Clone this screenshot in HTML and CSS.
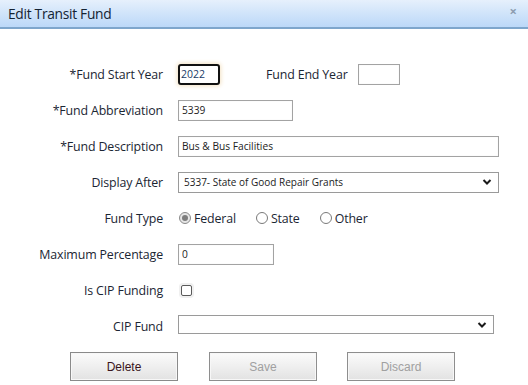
FILE: index.html
```html
<!DOCTYPE html>
<html>
<head>
<meta charset="utf-8">
<link rel="stylesheet" href="styles.css">
</head>
<body>
<div class="dialog">
  <div class="titlebar">
    <span class="title">Edit Transit Fund</span>
    <span class="close">&#215;</span>
  </div>
  <div class="form">
    <div class="label">*Fund Start Year</div>
    <div class="field row-flex">
      <input class="inp year focused" type="text" value="2022">
      <span class="label end-label">Fund End Year</span>
      <input class="inp year" type="text" value="">
    </div>

    <div class="label">*Fund Abbreviation</div>
    <div class="field"><input class="inp abbr" type="text" value="5339"></div>

    <div class="label">*Fund Description</div>
    <div class="field"><input class="inp wide" type="text" value="Bus &amp; Bus Facilities"></div>

    <div class="label">Display After</div>
    <div class="field">
      <div class="sel wide">
        <span class="sel-text">5337- State of Good Repair Grants</span>
        <svg class="chev" width="10" height="8" viewBox="0 0 10 8"><path d="M1.5 2 L5 5.5 L8.5 2" fill="none" stroke="#1a1a1a" stroke-width="2"/></svg>
      </div>
    </div>

    <div class="label">Fund Type</div>
    <div class="field radios">
      <span class="radio-item"><span class="radio checked"></span>Federal</span>
      <span class="radio-item"><span class="radio"></span>State</span>
      <span class="radio-item"><span class="radio"></span>Other</span>
    </div>

    <div class="label">Maximum Percentage</div>
    <div class="field"><input class="inp pct" type="text" value="0"></div>

    <div class="label">Is CIP Funding</div>
    <div class="field"><span class="check"></span></div>

    <div class="label">CIP Fund</div>
    <div class="field">
      <div class="sel cip">
        <span class="sel-text"></span>
        <svg class="chev" width="10" height="8" viewBox="0 0 10 8"><path d="M1.5 2 L5 5.5 L8.5 2" fill="none" stroke="#1a1a1a" stroke-width="2"/></svg>
      </div>
    </div>
  </div>
  <div class="buttons">
    <button class="btn">Delete</button>
    <button class="btn disabled">Save</button>
    <button class="btn disabled">Discard</button>
  </div>
</div>
</body>
</html>
```
FILE: styles.css
```css
html, body {
  margin: 0;
  padding: 0;
  background: #ffffff;
}
body {
  font-family: "Open Sans", "Noto Sans", sans-serif;
  width: 528px;
  height: 385px;
  overflow: hidden;
}
.dialog {
  width: 528px;
}
.titlebar {
  height: 27px;
  background: linear-gradient(to bottom, #e6f0fc 0%, #d0e4fa 50%, #bcd8f8 100%);
  border-bottom: 2px solid #7ea6cc;
  display: flex;
  align-items: center;
  justify-content: space-between;
  padding: 0 11px 0 8px;
}
.title {
  font-size: 13.8px;
  color: #142333;
  letter-spacing: -0.3px;
}
.close {
  font-size: 13px;
  color: #8c9db0;
  font-weight: bold;
  margin-top: -6px;
}
.form {
  display: grid;
  grid-template-columns: 163px 1fr;
  column-gap: 15px;
  grid-auto-rows: 36px;
  margin-top: 27px;
}
.label {
  text-align: right;
  font-size: 12.4px;
  color: #1b2633;
  display: flex;
  align-items: center;
  justify-content: flex-end;
  letter-spacing: -0.15px;
}
.field {
  display: flex;
  align-items: center;
}
.row-flex .end-label {
  margin-left: 46px;
  margin-right: 10px;
}
.inp {
  box-sizing: border-box;
  height: 21px;
  border: 1px solid #a3a3a3;
  box-shadow: inset 0 0 1px #ddd;
  font-family: "Open Sans", "Noto Sans", sans-serif;
  font-size: 10.2px;
  color: #222;
  padding: 0 3px;
  margin: 0;
  outline: none;
  background: #fff;
}
.year { width: 42px; }
.focused {
  border: 2px solid #111;
  border-radius: 3px;
  padding: 0 1px;
  color: #1a3a66;
  font-size: 10.5px;
  box-shadow: 0 0 4px 1px #f3e2c4;
}
.abbr { width: 115px; }
.wide { width: 321px; }
.pct { width: 96px; }
.sel {
  box-sizing: border-box;
  height: 21px;
  border: 1px solid #9a9a9a;
  display: flex;
  align-items: center;
  justify-content: space-between;
  padding: 0 6px 0 5px;
  font-size: 10px;
  color: #222;
  background: #fff;
}
.cip {
  width: 316px;
  height: 19px;
  margin-top: -3px;
}
.radios {
  font-size: 12.4px;
  color: #1b2633;
  letter-spacing: -0.15px;
}
.radio-item {
  display: flex;
  align-items: center;
}
.radio-item:nth-child(2) { margin-left: 19px; }
.radio-item:nth-child(3) { margin-left: 19px; }
.radio {
  box-sizing: border-box;
  width: 12px;
  height: 12px;
  border: 1px solid #7a7a7a;
  border-radius: 50%;
  background: #fff;
  margin-right: 3px;
  margin-left: 1px;
  display: inline-flex;
  align-items: center;
  justify-content: center;
}
.radio.checked {
  background: #e6e6e6;
  border-color: #8a8a8a;
}
.radio.checked::after {
  content: "";
  width: 6px;
  height: 6px;
  border-radius: 50%;
  background: #7d7d7d;
}
.check {
  box-sizing: border-box;
  width: 11px;
  height: 11px;
  border: 1px solid #5a5a5a;
  border-radius: 2px;
  margin-left: 3px;
  background: #fff;
  box-shadow: 0 0 0 2px #f0f0f0;
}
.buttons {
  display: flex;
  gap: 31px;
  padding-left: 70px;
  margin-top: 8px;
}
.btn {
  box-sizing: border-box;
  width: 108px;
  height: 29px;
  border: 1px solid #8a8a8a;
  background: linear-gradient(to bottom, #fbfbfb 0%, #efefef 50%, #e2e2e2 100%);
  box-shadow: inset 0 0 0 1px #f7f7f7;
  font-family: "Liberation Sans", Arial, sans-serif;
  font-size: 12px;
  color: #3a1420;
  padding: 0;
}
.btn.disabled {
  color: #a0a0a0;
  border-color: #8e8e8e;
}
.buttons .btn:nth-child(3) { margin-left: -1px; }
```
